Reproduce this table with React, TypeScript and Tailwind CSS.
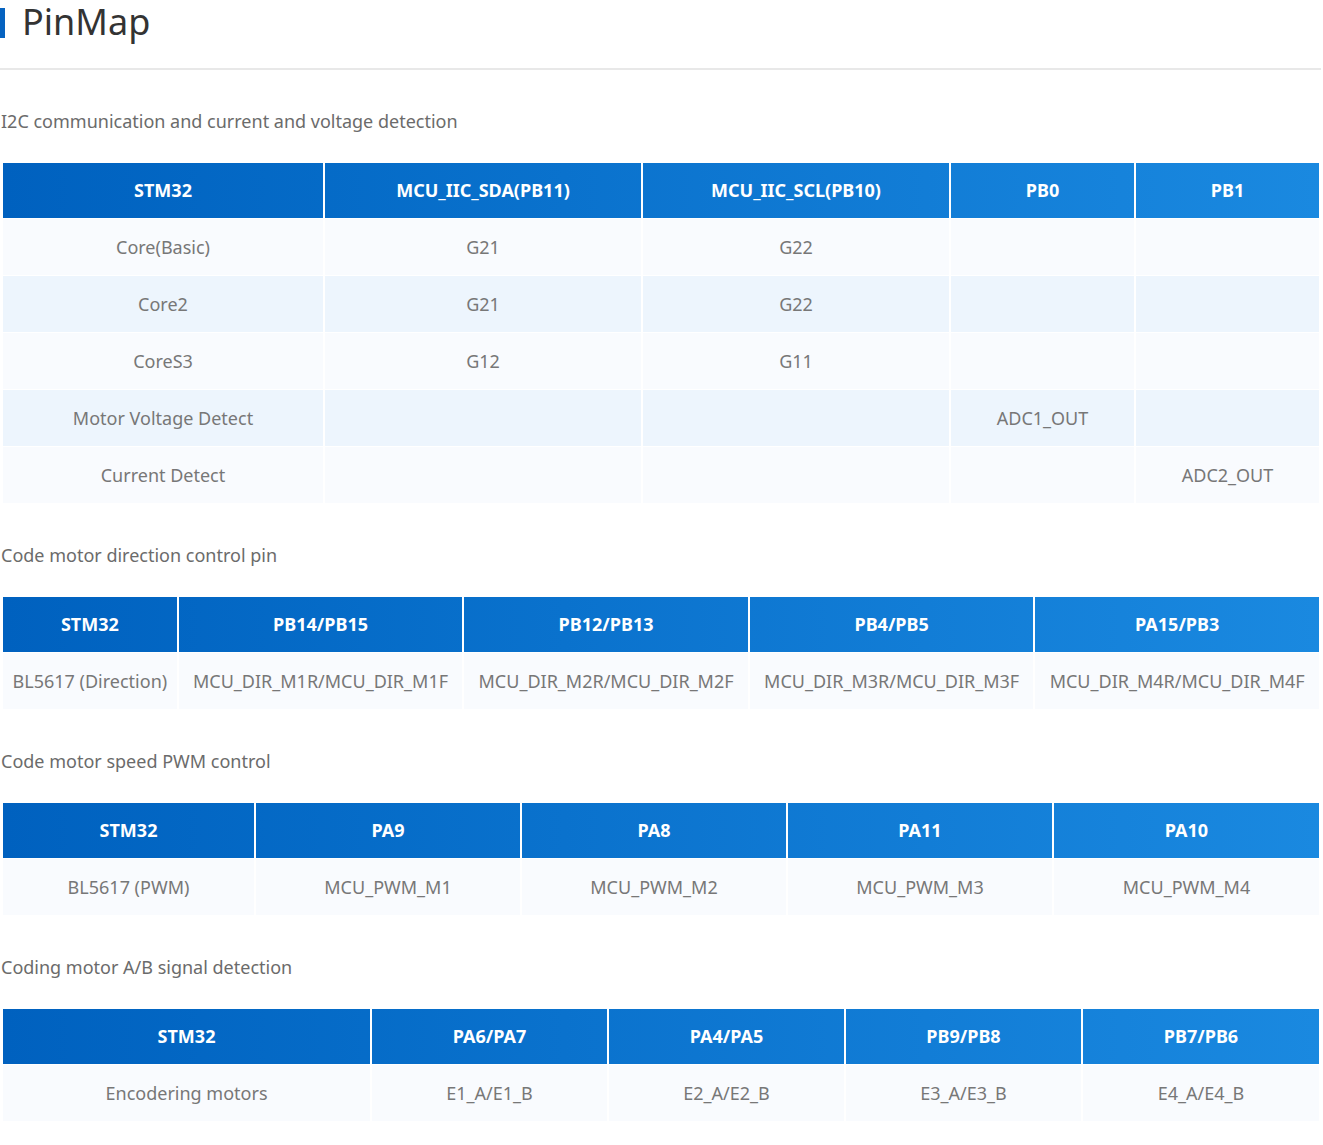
import React from "react";

type Table = {
  label: string;
  widths: number[];
  head: string[];
  rows: string[][];
};

const tables: Table[] = [
  {
    label: "I2C communication and current and voltage detection",
    widths: [322, 318, 308, 185, 183],
    head: ["STM32", "MCU_IIC_SDA(PB11)", "MCU_IIC_SCL(PB10)", "PB0", "PB1"],
    rows: [
      ["Core(Basic)", "G21", "G22", "", ""],
      ["Core2", "G21", "G22", "", ""],
      ["CoreS3", "G12", "G11", "", ""],
      ["Motor Voltage Detect", "", "", "ADC1_OUT", ""],
      ["Current Detect", "", "", "", "ADC2_OUT"],
    ],
  },
  {
    label: "Code motor direction control pin",
    widths: [176, 286, 286, 286, 284],
    head: ["STM32", "PB14/PB15", "PB12/PB13", "PB4/PB5", "PA15/PB3"],
    rows: [
      [
        "BL5617 (Direction)",
        "MCU_DIR_M1R/MCU_DIR_M1F",
        "MCU_DIR_M2R/MCU_DIR_M2F",
        "MCU_DIR_M3R/MCU_DIR_M3F",
        "MCU_DIR_M4R/MCU_DIR_M4F",
      ],
    ],
  },
  {
    label: "Code motor speed PWM control",
    widths: [253, 266, 266, 266, 265],
    head: ["STM32", "PA9", "PA8", "PA11", "PA10"],
    rows: [["BL5617 (PWM)", "MCU_PWM_M1", "MCU_PWM_M2", "MCU_PWM_M3", "MCU_PWM_M4"]],
  },
  {
    label: "Coding motor A/B signal detection",
    widths: [369, 237, 237, 237, 236],
    head: ["STM32", "PA6/PA7", "PA4/PA5", "PB9/PB8", "PB7/PB6"],
    rows: [["Encodering motors", "E1_A/E1_B", "E2_A/E2_B", "E3_A/E3_B", "E4_A/E4_B"]],
  },
];

function PinTable({ t, first }: { t: Table; first: boolean }) {
  return (
    <section className={first ? "mt-[39px]" : "mt-[40px]"}>
      <div className="h-[24px] leading-[24px] text-[18px] text-[#6b6b6b] pl-[1px]">{t.label}</div>
      <div className="mt-[30px] ml-[3px] w-[1316px]">
        <div className="flex h-[55px] bg-linear-to-r from-[#0061bf] to-[#1a89e0]">
          {t.head.map((h, i) => (
            <div
              key={i}
              style={{ width: t.widths[i] }}
              className={
                "flex items-center justify-center text-[18px] font-bold text-white " +
                (i < t.head.length - 1 ? "border-r-2 border-white" : "")
              }
            >
              {h}
            </div>
          ))}
        </div>
        {t.rows.map((r, ri) => (
          <div key={ri} className="flex h-[57px] border-t border-white">
            {r.map((c, ci) => (
              <div
                key={ci}
                style={{ width: t.widths[ci] }}
                className={
                  "flex items-center justify-center text-[18px] text-[#777777] whitespace-nowrap " +
                  (ri % 2 === 1 ? "bg-[#edf5fd] " : "bg-[#f9fbfe] ") +
                  (ci < r.length - 1 ? "border-r-2 border-white" : "")
                }
              >
                {c}
              </div>
            ))}
          </div>
        ))}
      </div>
    </section>
  );
}

export default function App() {
  return (
    <div className="w-[1323px] bg-white pb-[24px]" style={{ fontFamily: '"Noto Sans", "Open Sans", sans-serif' }}>
      <div className="flex items-center h-[46px]">
        <div className="w-[5px] h-[30px] bg-[#0663c0]" />
        <h1 className="ml-[17px] mb-[2px] text-[36px] leading-[44px] text-[#333333] font-normal">PinMap</h1>
      </div>
      <div className="mt-[22px] h-[2px] w-[1321px] bg-[#e8e8e8]" />
      {tables.map((t, i) => (
        <PinTable key={i} t={t} first={i === 0} />
      ))}
    </div>
  );
}
